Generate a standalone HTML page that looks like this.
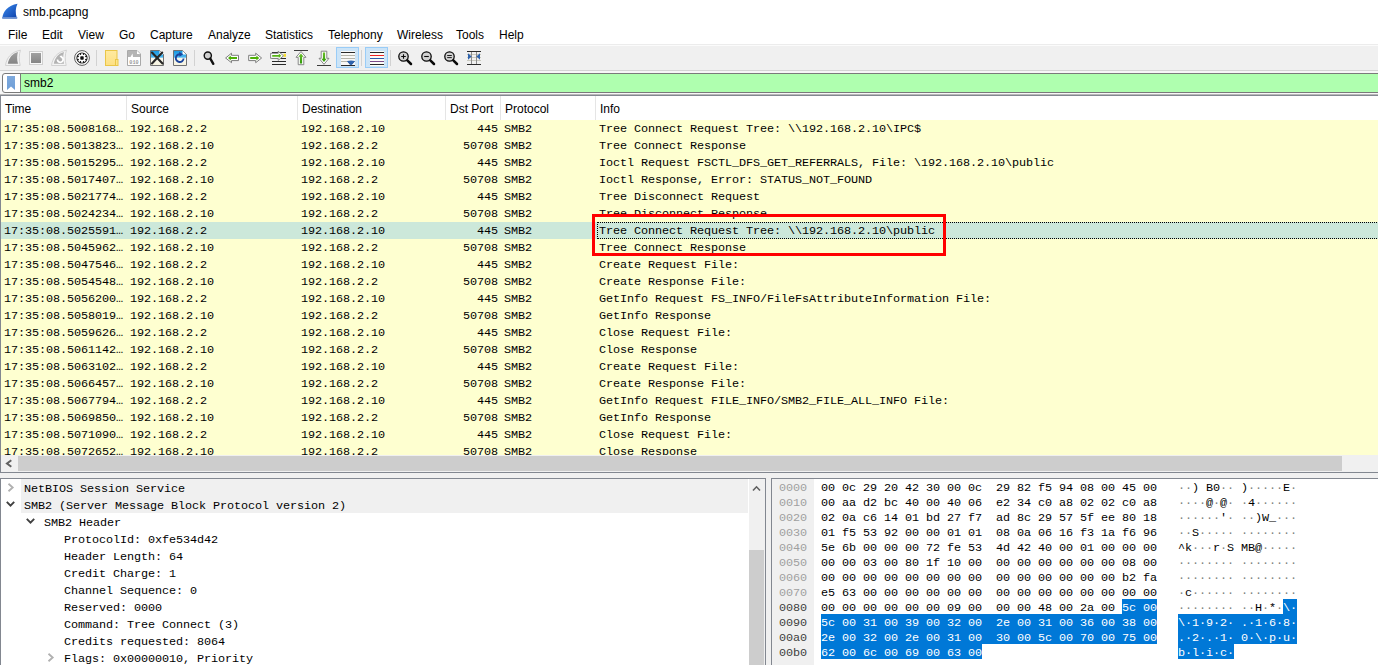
<!DOCTYPE html><html><head><meta charset="utf-8"><style>
*{box-sizing:border-box}
html,body{margin:0;padding:0}
body{width:1378px;height:665px;overflow:hidden;position:relative;background:#fff;font-family:"Liberation Sans",sans-serif;font-size:12px;color:#000}
.a{position:absolute}
.t{position:absolute;white-space:pre;line-height:17px}
.m{font-family:"Liberation Mono",monospace;font-size:11.8px;letter-spacing:-0.08px;margin-top:1px}
.menu span{position:absolute;top:0;white-space:pre}
svg{position:absolute;overflow:visible}
</style></head><body>
<svg style="left:0;top:0" width="24" height="22" viewBox="0 0 24 22"><defs><linearGradient id="fin" x1="0" y1="0" x2="1" y2="1"><stop offset="0" stop-color="#3b8cf0"/><stop offset="1" stop-color="#0d3fa8"/></linearGradient></defs><path d="M2.3 18.5 C3 11 8 5.5 17.5 3.8 C15.5 8 15 13 17 18.5 Z" fill="url(#fin)"/><rect x="2.3" y="17" width="15" height="1.6" fill="#6b8fd0"/></svg>
<div class="t" style="left:23px;top:4px">smb.pcapng</div>
<div class="t" style="left:8px;top:27px">File</div>
<div class="t" style="left:42px;top:27px">Edit</div>
<div class="t" style="left:78px;top:27px">View</div>
<div class="t" style="left:119px;top:27px">Go</div>
<div class="t" style="left:150px;top:27px">Capture</div>
<div class="t" style="left:208px;top:27px">Analyze</div>
<div class="t" style="left:265px;top:27px">Statistics</div>
<div class="t" style="left:328px;top:27px">Telephony</div>
<div class="t" style="left:397px;top:27px">Wireless</div>
<div class="t" style="left:456px;top:27px">Tools</div>
<div class="t" style="left:499px;top:27px">Help</div>
<div class="a" style="left:0;top:44px;width:1378px;height:1px;background:#ececec"></div>
<div class="a" style="left:0;top:45px;width:1378px;height:1px;background:#fbfbfb"></div>
<div class="a" style="left:0;top:46px;width:1378px;height:24px;background:#f0f0f0"></div>
<div class="a" style="left:0;top:70px;width:1378px;height:1px;background:#d4d4d4"></div>
<div class="a" style="left:0;top:71px;width:1378px;height:24px;background:#f7f7f7"></div>
<svg style="left:0;top:0" width="500" height="72" viewBox="0 0 500 72">
<defs>
<linearGradient id="gg" x1="0" y1="0" x2="0" y2="1"><stop offset="0" stop-color="#a0a0a0"/><stop offset="1" stop-color="#858585"/></linearGradient>
<linearGradient id="fold" x1="0" y1="0" x2="0" y2="1"><stop offset="0" stop-color="#ffeaa0"/><stop offset="1" stop-color="#fde083"/></linearGradient>
<linearGradient id="sky" x1="0" y1="0" x2="0" y2="1"><stop offset="0" stop-color="#1595e0"/><stop offset="0.45" stop-color="#4ab6f0"/><stop offset="0.5" stop-color="#f8f8f0"/><stop offset="1" stop-color="#f6f3de"/></linearGradient>
<linearGradient id="grn" x1="0" y1="0" x2="0" y2="1"><stop offset="0" stop-color="#6cc02a"/><stop offset="1" stop-color="#2f9a08"/></linearGradient>
</defs>
<!-- start fin (disabled) -->
<path d="M5.5 65.5 C6.5 58 11 52 20.5 50.2 C19 54 18.8 60 20.2 65.5 Z" fill="#f4f4f4" stroke="#d2d2d2" stroke-width="1"/>
<path d="M7.8 63.8 C9 57.5 12.5 53.5 18 52 C17 55 16.8 60 18 63.8 Z" fill="url(#gg)"/>
<!-- stop -->
<rect x="29.5" y="51.5" width="13" height="13" fill="#f8f8f8" stroke="#d0d0d0" stroke-width="1"/>
<rect x="31" y="53" width="10" height="10" fill="url(#gg)"/>
<!-- restart fin -->
<path d="M51.5 65.5 C52.5 58 57 52 66.5 50.2 C65 54 64.8 60 66.2 65.5 Z" fill="#f4f4f4" stroke="#d2d2d2" stroke-width="1"/>
<path d="M53.8 63.8 C55 57.5 58.5 53.5 64 52 C63 55 62.8 60 64 63.8 Z" fill="#b2b2b2"/>
<path d="M57.5 59.5 A2.8 2.8 0 1 0 61.5 57" fill="none" stroke="#fff" stroke-width="1.6"/>
<path d="M59.5 56 L62.5 55.5 L61.5 58.5 Z" fill="#fff"/>
<!-- options gear -->
<circle cx="82" cy="58" r="7.4" fill="#fff" stroke="#5a5a5a" stroke-width="1"/>
<circle cx="82" cy="58" r="5.6" fill="#1a1a1a"/>
<g fill="#fff" transform="translate(82 58)">
<circle r="3.3"/>
<rect x="-0.9" y="-4.6" width="1.8" height="9.2"/>
<rect x="-0.9" y="-4.6" width="1.8" height="9.2" transform="rotate(45)"/>
<rect x="-0.9" y="-4.6" width="1.8" height="9.2" transform="rotate(90)"/>
<rect x="-0.9" y="-4.6" width="1.8" height="9.2" transform="rotate(135)"/>
</g>
<rect x="80.3" y="56.3" width="3.4" height="3.4" rx="0.8" fill="#111"/>
<!-- separators -->
<rect x="96" y="50" width="1" height="16" fill="#d2d2d2"/>
<rect x="194" y="50" width="1" height="16" fill="#d2d2d2"/>
<rect x="361" y="50" width="1" height="16" fill="#d2d2d2"/>
<rect x="390" y="50" width="1" height="16" fill="#d2d2d2"/>
<!-- open folder -->
<rect x="105.5" y="50.5" width="11.5" height="15" fill="url(#fold)" stroke="#eac648" stroke-width="1"/>
<rect x="115.5" y="59.5" width="2.5" height="6" fill="#fde58c" stroke="#eac648" stroke-width="1"/>
<!-- open recent 010 -->
<path d="M127.5 50.5 H137 L140.5 54 V65.5 H127.5 Z" fill="#fff" stroke="#a9a9a9" stroke-width="1"/>
<path d="M128 51 H136.8 L140 54.2 V57 H128 Z" fill="#b4b4b4"/>
<path d="M137 51 L140 54 H137 Z" fill="#fff"/>
<path d="M130.5 57 L132.5 53.5 L133 57 Z" fill="#fff"/>
<text x="134" y="63.5" font-family="Liberation Mono" font-size="5.2" fill="#9a9a9a" text-anchor="middle" font-weight="bold">010</text>
<!-- close file -->
<path d="M150.5 50.5 H159.5 L163.5 54.5 V65.5 H150.5 Z" fill="url(#sky)" stroke="#727272" stroke-width="1"/>
<path d="M159.5 50.8 L163.2 54.5 H159.5 Z" fill="#fff"/>
<path d="M152 52.5 L162.5 63.5 M162.2 52.5 L152 63.5" stroke="#262626" stroke-width="2.1" stroke-linecap="round"/>
<!-- reload -->
<path d="M173.5 50.5 H182.5 L186.5 54.5 V65.5 H173.5 Z" fill="url(#sky)" stroke="#727272" stroke-width="1"/>
<path d="M182.5 50.8 L186.2 54.5 H182.5 Z" fill="#fff"/>
<path d="M183.6 58.5 A3.9 3.9 0 1 1 180.5 54.3" fill="none" stroke="#1b449c" stroke-width="1.9"/>
<path d="M179.2 51.8 L183.2 54.2 L179.5 56.8 Z" fill="#1b449c"/>
<!-- find -->
<circle cx="207.8" cy="55.6" r="3.6" fill="#cfcfcf" stroke="#111" stroke-width="1.4"/>
<path d="M210.3 58.6 L213.3 63.8" stroke="#111" stroke-width="2.4" stroke-linecap="round"/>
<!-- back -->
<path d="M225.6 58 L231.5 53.2 V55.3 H238.5 V60.6 H231.5 V62.7 Z" fill="#fff" stroke="#7c7c7c" stroke-width="1" stroke-linejoin="round"/>
<path d="M228 58 L230.8 55.6 V57 H237 V59 H230.8 V60.4 Z" fill="#4daf07"/>
<!-- forward -->
<path d="M261.6 58 L255.7 53.2 V55.3 H248.7 V60.6 H255.7 V62.7 Z" fill="#fff" stroke="#7c7c7c" stroke-width="1" stroke-linejoin="round"/>
<path d="M259.2 58 L256.4 55.6 V57 H250.2 V59 H256.4 V60.4 Z" fill="#4daf07"/>
<!-- go to packet -->
<rect x="272" y="52" width="14" height="1" fill="#2a2a2a"/>
<rect x="272" y="58" width="14" height="1" fill="#2a2a2a"/>
<rect x="272" y="61" width="14" height="1" fill="#2a2a2a"/>
<rect x="272" y="64" width="14" height="1" fill="#2a2a2a"/>
<rect x="283.5" y="53.8" width="2.5" height="3" fill="#f6de30"/>
<path d="M283.5 55.8 L278.2 51.2 V53.3 H270.6 V58.4 H278.2 V60.4 Z" fill="#fff" stroke="#7c7c7c" stroke-width="0.9" stroke-linejoin="round"/>
<path d="M281.2 55.8 L278.8 53.6 V55 H272.2 V56.8 H278.8 V58.1 Z" fill="#56b515"/>
<!-- first packet -->
<rect x="294" y="50" width="14" height="1" fill="#3c3c3c"/>
<path d="M301 51.5 L306 57.3 H303.8 V64.7 H298.2 V57.3 H296 Z" fill="#fff" stroke="#7c7c7c" stroke-width="0.9" stroke-linejoin="round"/>
<path d="M301 53.5 L303.6 56.8 H302.1 V63.5 H299.9 V56.8 H298.4 Z" fill="url(#grn)"/>
<!-- last packet -->
<rect x="317" y="65" width="14" height="1" fill="#3c3c3c"/>
<path d="M324 64.3 L329 58.3 H326.8 V51.2 H321.2 V58.3 H319 Z" fill="#fff" stroke="#7c7c7c" stroke-width="0.9" stroke-linejoin="round"/>
<path d="M324 62 L326.6 58.8 H325.1 V52.5 H322.9 V58.8 H321.4 Z" fill="url(#grn)"/>
<!-- autoscroll (checked) -->
<rect x="336.5" y="47.5" width="22" height="20" fill="#cce4f7" stroke="#99ccf7" stroke-width="1"/>
<rect x="341" y="51" width="14" height="15" fill="#f8f8f6"/>
<rect x="341" y="52" width="14" height="1" fill="#2a2a2a"/>
<rect x="341" y="55" width="14" height="1" fill="#b4b4aa"/>
<rect x="341" y="58" width="14" height="1" fill="#b4b4aa"/>
<rect x="341" y="61" width="14" height="1" fill="#b4b4aa"/>
<rect x="341" y="65" width="14" height="1" fill="#2a2a2a"/>
<path d="M347 61.2 H355 L352.3 64.2 H349.7 L351 66 Z" fill="#2f63ad"/>
<path d="M347.2 61 Q351 60 354.8 61 L352 64.5 Q351 65.8 350 64.5 Z" fill="#2f63ad"/>
<!-- colorize (checked) -->
<rect x="365.5" y="47.5" width="22" height="20" fill="#cce4f7" stroke="#99ccf7" stroke-width="1"/>
<rect x="370" y="51" width="14" height="15" fill="#fbfbf6"/>
<rect x="370" y="52" width="14" height="1" fill="#2a2a2a"/>
<rect x="370" y="55" width="14" height="1" fill="#ee2222"/>
<rect x="370" y="58" width="14" height="1" fill="#2f5aa8"/>
<rect x="370" y="61" width="14" height="1" fill="#7a4a88"/>
<rect x="370" y="64" width="14" height="1" fill="#2a2a2a"/>
<!-- zoom in -->
<circle cx="403.5" cy="56.5" r="4.7" fill="#d2d2d2" stroke="#0a0a0a" stroke-width="1.3"/>
<path d="M401.2 56.5 H405.8 M403.5 54.2 V58.8" stroke="#0a0a0a" stroke-width="1.1"/>
<path d="M407.3 60.3 L411 64" stroke="#0a0a0a" stroke-width="2.5" stroke-linecap="round"/>
<!-- zoom out -->
<circle cx="426.5" cy="56.5" r="4.7" fill="#d2d2d2" stroke="#0a0a0a" stroke-width="1.3"/>
<path d="M424.2 56.5 H428.8" stroke="#0a0a0a" stroke-width="1.1"/>
<path d="M430.3 60.3 L434 64" stroke="#0a0a0a" stroke-width="2.5" stroke-linecap="round"/>
<!-- normal size -->
<circle cx="449.5" cy="56.5" r="4.7" fill="#d2d2d2" stroke="#0a0a0a" stroke-width="1.3"/>
<path d="M447.2 55.5 H451.8 M447.2 57.6 H451.8" stroke="#0a0a0a" stroke-width="0.9"/>
<path d="M453.3 60.3 L457 64" stroke="#0a0a0a" stroke-width="2.5" stroke-linecap="round"/>
<!-- resize columns -->
<rect x="467" y="51" width="14" height="1" fill="#2a2a2a"/>
<rect x="467" y="64" width="14" height="1" fill="#2a2a2a"/>
<rect x="467" y="54" width="14" height="1" fill="#c8c8be"/>
<rect x="467" y="57" width="14" height="1" fill="#c8c8be"/>
<rect x="467" y="60" width="14" height="1" fill="#c8c8be"/>
<rect x="471" y="52" width="1" height="12" fill="#8c8c8c"/>
<rect x="476" y="52" width="1" height="12" fill="#8c8c8c"/>
<path d="M468 53.3 L471.6 56.5 L468 59.8 Z" fill="#2f63ad"/>
<path d="M480 53.3 L476.4 56.5 L480 59.8 Z" fill="#2f63ad"/>
</svg>

<div class="a" style="left:2px;top:73px;width:1380px;height:20px;border:1px solid #7a7a7a;border-radius:3px;background:#fff;overflow:hidden"><div class="a" style="left:17px;top:0;width:1370px;height:18px;background:#afffaf;border-left:1px solid #7a7a7a"></div></div>
<svg style="left:0;top:0" width="30" height="95"><defs><linearGradient id="bm" x1="0" y1="0" x2="0" y2="1"><stop offset="0" stop-color="#7ea9dc"/><stop offset="1" stop-color="#6f9fd8"/></linearGradient></defs><path d="M7 76 H15 V90 L11 86.5 L7 90 Z" fill="url(#bm)"/></svg>
<div class="t" style="left:24px;top:75px">smb2</div>
<div class="a" style="left:0;top:94px;width:1378px;height:1px;background:#b9b9b9"></div>
<div class="a" style="left:0;top:95px;width:1378px;height:378px;border-top:1px solid #828790;border-left:1px solid #828790;border-bottom:1px solid #828790;background:#fff"></div>
<div class="a" style="left:126px;top:96px;width:1px;height:24px;background:#e5e5e5"></div>
<div class="a" style="left:297px;top:96px;width:1px;height:24px;background:#e5e5e5"></div>
<div class="a" style="left:445px;top:96px;width:1px;height:24px;background:#e5e5e5"></div>
<div class="a" style="left:500px;top:96px;width:1px;height:24px;background:#e5e5e5"></div>
<div class="a" style="left:595px;top:96px;width:1px;height:24px;background:#e5e5e5"></div>
<div class="t" style="left:5px;top:101px">Time</div>
<div class="t" style="left:131px;top:101px">Source</div>
<div class="t" style="left:302px;top:101px">Destination</div>
<div class="t" style="left:450px;top:101px">Dst Port</div>
<div class="t" style="left:505px;top:101px">Protocol</div>
<div class="t" style="left:600px;top:101px">Info</div>
<div class="a" style="left:1px;top:120px;width:1377px;height:335px;overflow:hidden">
<div class="a" style="left:0;top:0px;width:1377px;height:17px;background:#feffd0"></div>
<div class="t m" style="left:3px;top:0px">17:35:08.5008168…</div>
<div class="t m" style="left:129px;top:0px">192.168.2.2</div>
<div class="t m" style="left:300px;top:0px">192.168.2.10</div>
<div class="t m" style="left:476px;top:0px">445</div>
<div class="t m" style="left:503px;top:0px">SMB2</div>
<div class="t m" style="left:598px;top:0px">Tree Connect Request Tree: \\192.168.2.10\IPC$</div>
<div class="a" style="left:0;top:17px;width:1377px;height:17px;background:#feffd0"></div>
<div class="t m" style="left:3px;top:17px">17:35:08.5013823…</div>
<div class="t m" style="left:129px;top:17px">192.168.2.10</div>
<div class="t m" style="left:300px;top:17px">192.168.2.2</div>
<div class="t m" style="left:462px;top:17px">50708</div>
<div class="t m" style="left:503px;top:17px">SMB2</div>
<div class="t m" style="left:598px;top:17px">Tree Connect Response</div>
<div class="a" style="left:0;top:34px;width:1377px;height:17px;background:#feffd0"></div>
<div class="t m" style="left:3px;top:34px">17:35:08.5015295…</div>
<div class="t m" style="left:129px;top:34px">192.168.2.2</div>
<div class="t m" style="left:300px;top:34px">192.168.2.10</div>
<div class="t m" style="left:476px;top:34px">445</div>
<div class="t m" style="left:503px;top:34px">SMB2</div>
<div class="t m" style="left:598px;top:34px">Ioctl Request FSCTL_DFS_GET_REFERRALS, File: \192.168.2.10\public</div>
<div class="a" style="left:0;top:51px;width:1377px;height:17px;background:#feffd0"></div>
<div class="t m" style="left:3px;top:51px">17:35:08.5017407…</div>
<div class="t m" style="left:129px;top:51px">192.168.2.10</div>
<div class="t m" style="left:300px;top:51px">192.168.2.2</div>
<div class="t m" style="left:462px;top:51px">50708</div>
<div class="t m" style="left:503px;top:51px">SMB2</div>
<div class="t m" style="left:598px;top:51px">Ioctl Response, Error: STATUS_NOT_FOUND</div>
<div class="a" style="left:0;top:68px;width:1377px;height:17px;background:#feffd0"></div>
<div class="t m" style="left:3px;top:68px">17:35:08.5021774…</div>
<div class="t m" style="left:129px;top:68px">192.168.2.2</div>
<div class="t m" style="left:300px;top:68px">192.168.2.10</div>
<div class="t m" style="left:476px;top:68px">445</div>
<div class="t m" style="left:503px;top:68px">SMB2</div>
<div class="t m" style="left:598px;top:68px">Tree Disconnect Request</div>
<div class="a" style="left:0;top:85px;width:1377px;height:17px;background:#feffd0"></div>
<div class="t m" style="left:3px;top:85px">17:35:08.5024234…</div>
<div class="t m" style="left:129px;top:85px">192.168.2.10</div>
<div class="t m" style="left:300px;top:85px">192.168.2.2</div>
<div class="t m" style="left:462px;top:85px">50708</div>
<div class="t m" style="left:503px;top:85px">SMB2</div>
<div class="t m" style="left:598px;top:85px">Tree Disconnect Response</div>
<div class="a" style="left:0;top:102px;width:1377px;height:17px;background:#cce8da"></div>
<div class="t m" style="left:3px;top:102px">17:35:08.5025591…</div>
<div class="t m" style="left:129px;top:102px">192.168.2.2</div>
<div class="t m" style="left:300px;top:102px">192.168.2.10</div>
<div class="t m" style="left:476px;top:102px">445</div>
<div class="t m" style="left:503px;top:102px">SMB2</div>
<div class="t m" style="left:598px;top:102px">Tree Connect Request Tree: \\192.168.2.10\public</div>
<div class="a" style="left:596px;top:102px;width:800px;height:17px;border:1px dotted #000"></div>
<div class="a" style="left:0;top:119px;width:1377px;height:17px;background:#feffd0"></div>
<div class="t m" style="left:3px;top:119px">17:35:08.5045962…</div>
<div class="t m" style="left:129px;top:119px">192.168.2.10</div>
<div class="t m" style="left:300px;top:119px">192.168.2.2</div>
<div class="t m" style="left:462px;top:119px">50708</div>
<div class="t m" style="left:503px;top:119px">SMB2</div>
<div class="t m" style="left:598px;top:119px">Tree Connect Response</div>
<div class="a" style="left:0;top:136px;width:1377px;height:17px;background:#feffd0"></div>
<div class="t m" style="left:3px;top:136px">17:35:08.5047546…</div>
<div class="t m" style="left:129px;top:136px">192.168.2.2</div>
<div class="t m" style="left:300px;top:136px">192.168.2.10</div>
<div class="t m" style="left:476px;top:136px">445</div>
<div class="t m" style="left:503px;top:136px">SMB2</div>
<div class="t m" style="left:598px;top:136px">Create Request File:</div>
<div class="a" style="left:0;top:153px;width:1377px;height:17px;background:#feffd0"></div>
<div class="t m" style="left:3px;top:153px">17:35:08.5054548…</div>
<div class="t m" style="left:129px;top:153px">192.168.2.10</div>
<div class="t m" style="left:300px;top:153px">192.168.2.2</div>
<div class="t m" style="left:462px;top:153px">50708</div>
<div class="t m" style="left:503px;top:153px">SMB2</div>
<div class="t m" style="left:598px;top:153px">Create Response File:</div>
<div class="a" style="left:0;top:170px;width:1377px;height:17px;background:#feffd0"></div>
<div class="t m" style="left:3px;top:170px">17:35:08.5056200…</div>
<div class="t m" style="left:129px;top:170px">192.168.2.2</div>
<div class="t m" style="left:300px;top:170px">192.168.2.10</div>
<div class="t m" style="left:476px;top:170px">445</div>
<div class="t m" style="left:503px;top:170px">SMB2</div>
<div class="t m" style="left:598px;top:170px">GetInfo Request FS_INFO/FileFsAttributeInformation File:</div>
<div class="a" style="left:0;top:187px;width:1377px;height:17px;background:#feffd0"></div>
<div class="t m" style="left:3px;top:187px">17:35:08.5058019…</div>
<div class="t m" style="left:129px;top:187px">192.168.2.10</div>
<div class="t m" style="left:300px;top:187px">192.168.2.2</div>
<div class="t m" style="left:462px;top:187px">50708</div>
<div class="t m" style="left:503px;top:187px">SMB2</div>
<div class="t m" style="left:598px;top:187px">GetInfo Response</div>
<div class="a" style="left:0;top:204px;width:1377px;height:17px;background:#feffd0"></div>
<div class="t m" style="left:3px;top:204px">17:35:08.5059626…</div>
<div class="t m" style="left:129px;top:204px">192.168.2.2</div>
<div class="t m" style="left:300px;top:204px">192.168.2.10</div>
<div class="t m" style="left:476px;top:204px">445</div>
<div class="t m" style="left:503px;top:204px">SMB2</div>
<div class="t m" style="left:598px;top:204px">Close Request File:</div>
<div class="a" style="left:0;top:221px;width:1377px;height:17px;background:#feffd0"></div>
<div class="t m" style="left:3px;top:221px">17:35:08.5061142…</div>
<div class="t m" style="left:129px;top:221px">192.168.2.10</div>
<div class="t m" style="left:300px;top:221px">192.168.2.2</div>
<div class="t m" style="left:462px;top:221px">50708</div>
<div class="t m" style="left:503px;top:221px">SMB2</div>
<div class="t m" style="left:598px;top:221px">Close Response</div>
<div class="a" style="left:0;top:238px;width:1377px;height:17px;background:#feffd0"></div>
<div class="t m" style="left:3px;top:238px">17:35:08.5063102…</div>
<div class="t m" style="left:129px;top:238px">192.168.2.2</div>
<div class="t m" style="left:300px;top:238px">192.168.2.10</div>
<div class="t m" style="left:476px;top:238px">445</div>
<div class="t m" style="left:503px;top:238px">SMB2</div>
<div class="t m" style="left:598px;top:238px">Create Request File:</div>
<div class="a" style="left:0;top:255px;width:1377px;height:17px;background:#feffd0"></div>
<div class="t m" style="left:3px;top:255px">17:35:08.5066457…</div>
<div class="t m" style="left:129px;top:255px">192.168.2.10</div>
<div class="t m" style="left:300px;top:255px">192.168.2.2</div>
<div class="t m" style="left:462px;top:255px">50708</div>
<div class="t m" style="left:503px;top:255px">SMB2</div>
<div class="t m" style="left:598px;top:255px">Create Response File:</div>
<div class="a" style="left:0;top:272px;width:1377px;height:17px;background:#feffd0"></div>
<div class="t m" style="left:3px;top:272px">17:35:08.5067794…</div>
<div class="t m" style="left:129px;top:272px">192.168.2.2</div>
<div class="t m" style="left:300px;top:272px">192.168.2.10</div>
<div class="t m" style="left:476px;top:272px">445</div>
<div class="t m" style="left:503px;top:272px">SMB2</div>
<div class="t m" style="left:598px;top:272px">GetInfo Request FILE_INFO/SMB2_FILE_ALL_INFO File:</div>
<div class="a" style="left:0;top:289px;width:1377px;height:17px;background:#feffd0"></div>
<div class="t m" style="left:3px;top:289px">17:35:08.5069850…</div>
<div class="t m" style="left:129px;top:289px">192.168.2.10</div>
<div class="t m" style="left:300px;top:289px">192.168.2.2</div>
<div class="t m" style="left:462px;top:289px">50708</div>
<div class="t m" style="left:503px;top:289px">SMB2</div>
<div class="t m" style="left:598px;top:289px">GetInfo Response</div>
<div class="a" style="left:0;top:306px;width:1377px;height:17px;background:#feffd0"></div>
<div class="t m" style="left:3px;top:306px">17:35:08.5071090…</div>
<div class="t m" style="left:129px;top:306px">192.168.2.2</div>
<div class="t m" style="left:300px;top:306px">192.168.2.10</div>
<div class="t m" style="left:476px;top:306px">445</div>
<div class="t m" style="left:503px;top:306px">SMB2</div>
<div class="t m" style="left:598px;top:306px">Close Request File:</div>
<div class="a" style="left:0;top:323px;width:1377px;height:17px;background:#feffd0"></div>
<div class="t m" style="left:3px;top:323px">17:35:08.5072652…</div>
<div class="t m" style="left:129px;top:323px">192.168.2.10</div>
<div class="t m" style="left:300px;top:323px">192.168.2.2</div>
<div class="t m" style="left:462px;top:323px">50708</div>
<div class="t m" style="left:503px;top:323px">SMB2</div>
<div class="t m" style="left:598px;top:323px">Close Response</div>
</div>
<div class="a" style="left:1px;top:455px;width:1377px;height:17px;background:#f0f0f0"></div>
<div class="a" style="left:18px;top:456px;width:1324px;height:15px;background:#cdcdcd"></div>
<svg style="left:0;top:0" width="20" height="480"><path d="M11.3 460.3 L7 463.5 L11.3 466.7" stroke="#606060" stroke-width="2" fill="none"/></svg>
<div class="a" style="left:592px;top:214px;width:354px;height:42px;border:3px solid #ff0000"></div>
<div class="a" style="left:0;top:473px;width:1378px;height:5px;background:#f0f0f0"></div>
<div class="a" style="left:0;top:478px;width:766px;height:200px;border-top:1px solid #828790;border-left:1px solid #828790;border-right:1px solid #828790;background:#fff"></div>
<div class="a" style="left:749px;top:479px;width:16px;height:200px;background:#f0f0f0"></div>
<div class="a" style="left:749px;top:550px;width:15px;height:120px;background:#cdcdcd"></div>
<svg style="left:0;top:0" width="770" height="500"><path d="M753 490.5 L756.5 486.8 L760 490.5" stroke="#606060" stroke-width="1.6" fill="none"/></svg>
<div class="a" style="left:21px;top:479px;width:727px;height:17px;background:#f0f0f0"></div>
<div class="t m" style="left:24px;top:480px">NetBIOS Session Service</div>
<svg style="left:0;top:0" width="770" height="680"><path d="M8.5 483.8 L12.7 487.5 L8.5 491.2" stroke="#b0b0b0" stroke-width="1.8" fill="none"/></svg>
<div class="a" style="left:21px;top:496px;width:727px;height:17px;background:#f0f0f0"></div>
<div class="t m" style="left:24px;top:497px">SMB2 (Server Message Block Protocol version 2)</div>
<svg style="left:0;top:0" width="770" height="680"><path d="M6.8 501.8 L10.5 505.6 L14.2 501.8" stroke="#404040" stroke-width="1.9" fill="none"/></svg>
<div class="t m" style="left:44px;top:514px">SMB2 Header</div>
<svg style="left:0;top:0" width="770" height="680"><path d="M26.8 518.8 L30.5 522.6 L34.2 518.8" stroke="#404040" stroke-width="1.9" fill="none"/></svg>
<div class="t m" style="left:64px;top:531px">ProtocolId: 0xfe534d42</div>
<div class="t m" style="left:64px;top:548px">Header Length: 64</div>
<div class="t m" style="left:64px;top:565px">Credit Charge: 1</div>
<div class="t m" style="left:64px;top:582px">Channel Sequence: 0</div>
<div class="t m" style="left:64px;top:599px">Reserved: 0000</div>
<div class="t m" style="left:64px;top:616px">Command: Tree Connect (3)</div>
<div class="t m" style="left:64px;top:633px">Credits requested: 8064</div>
<div class="t m" style="left:64px;top:650px">Flags: 0x00000010, Priority</div>
<svg style="left:0;top:0" width="770" height="680"><path d="M48.5 653.8 L52.7 657.5 L48.5 661.2" stroke="#b0b0b0" stroke-width="1.8" fill="none"/></svg>
<div class="a" style="left:766px;top:478px;width:5px;height:200px;background:#f0f0f0"></div>
<div class="a" style="left:771px;top:478px;width:607px;height:200px;border-top:1px solid #828790;border-left:1px solid #828790;background:#fff"></div>
<div class="a" style="left:772px;top:479px;width:42px;height:200px;background:#f0f0f0"></div>
<div class="t m" style="left:779px;top:479px;color:#a0a0a0">0000</div>
<div class="t m" style="left:821px;top:479px;color:#000">00</div>
<div class="t m" style="left:842px;top:479px;color:#000">0c</div>
<div class="t m" style="left:863px;top:479px;color:#000">29</div>
<div class="t m" style="left:884px;top:479px;color:#000">20</div>
<div class="t m" style="left:905px;top:479px;color:#000">42</div>
<div class="t m" style="left:926px;top:479px;color:#000">30</div>
<div class="t m" style="left:947px;top:479px;color:#000">00</div>
<div class="t m" style="left:968px;top:479px;color:#000">0c</div>
<div class="t m" style="left:996px;top:479px;color:#000">29</div>
<div class="t m" style="left:1017px;top:479px;color:#000">82</div>
<div class="t m" style="left:1038px;top:479px;color:#000">f5</div>
<div class="t m" style="left:1059px;top:479px;color:#000">94</div>
<div class="t m" style="left:1080px;top:479px;color:#000">08</div>
<div class="t m" style="left:1101px;top:479px;color:#000">00</div>
<div class="t m" style="left:1122px;top:479px;color:#000">45</div>
<div class="t m" style="left:1143px;top:479px;color:#000">00</div>
<div class="t m" style="left:1178px;top:479px;color:#808080">·</div>
<div class="t m" style="left:1185px;top:479px;color:#808080">·</div>
<div class="t m" style="left:1192px;top:479px;color:#000">)</div>
<div class="t m" style="left:1199px;top:479px;color:#000"> </div>
<div class="t m" style="left:1206px;top:479px;color:#000">B</div>
<div class="t m" style="left:1213px;top:479px;color:#000">0</div>
<div class="t m" style="left:1220px;top:479px;color:#808080">·</div>
<div class="t m" style="left:1227px;top:479px;color:#808080">·</div>
<div class="t m" style="left:1241px;top:479px;color:#000">)</div>
<div class="t m" style="left:1248px;top:479px;color:#808080">·</div>
<div class="t m" style="left:1255px;top:479px;color:#808080">·</div>
<div class="t m" style="left:1262px;top:479px;color:#808080">·</div>
<div class="t m" style="left:1269px;top:479px;color:#808080">·</div>
<div class="t m" style="left:1276px;top:479px;color:#808080">·</div>
<div class="t m" style="left:1283px;top:479px;color:#000">E</div>
<div class="t m" style="left:1290px;top:479px;color:#808080">·</div>
<div class="t m" style="left:779px;top:494px;color:#a0a0a0">0010</div>
<div class="t m" style="left:821px;top:494px;color:#000">00</div>
<div class="t m" style="left:842px;top:494px;color:#000">aa</div>
<div class="t m" style="left:863px;top:494px;color:#000">d2</div>
<div class="t m" style="left:884px;top:494px;color:#000">bc</div>
<div class="t m" style="left:905px;top:494px;color:#000">40</div>
<div class="t m" style="left:926px;top:494px;color:#000">00</div>
<div class="t m" style="left:947px;top:494px;color:#000">40</div>
<div class="t m" style="left:968px;top:494px;color:#000">06</div>
<div class="t m" style="left:996px;top:494px;color:#000">e2</div>
<div class="t m" style="left:1017px;top:494px;color:#000">34</div>
<div class="t m" style="left:1038px;top:494px;color:#000">c0</div>
<div class="t m" style="left:1059px;top:494px;color:#000">a8</div>
<div class="t m" style="left:1080px;top:494px;color:#000">02</div>
<div class="t m" style="left:1101px;top:494px;color:#000">02</div>
<div class="t m" style="left:1122px;top:494px;color:#000">c0</div>
<div class="t m" style="left:1143px;top:494px;color:#000">a8</div>
<div class="t m" style="left:1178px;top:494px;color:#808080">·</div>
<div class="t m" style="left:1185px;top:494px;color:#808080">·</div>
<div class="t m" style="left:1192px;top:494px;color:#808080">·</div>
<div class="t m" style="left:1199px;top:494px;color:#808080">·</div>
<div class="t m" style="left:1206px;top:494px;color:#000">@</div>
<div class="t m" style="left:1213px;top:494px;color:#808080">·</div>
<div class="t m" style="left:1220px;top:494px;color:#000">@</div>
<div class="t m" style="left:1227px;top:494px;color:#808080">·</div>
<div class="t m" style="left:1241px;top:494px;color:#808080">·</div>
<div class="t m" style="left:1248px;top:494px;color:#000">4</div>
<div class="t m" style="left:1255px;top:494px;color:#808080">·</div>
<div class="t m" style="left:1262px;top:494px;color:#808080">·</div>
<div class="t m" style="left:1269px;top:494px;color:#808080">·</div>
<div class="t m" style="left:1276px;top:494px;color:#808080">·</div>
<div class="t m" style="left:1283px;top:494px;color:#808080">·</div>
<div class="t m" style="left:1290px;top:494px;color:#808080">·</div>
<div class="t m" style="left:779px;top:509px;color:#a0a0a0">0020</div>
<div class="t m" style="left:821px;top:509px;color:#000">02</div>
<div class="t m" style="left:842px;top:509px;color:#000">0a</div>
<div class="t m" style="left:863px;top:509px;color:#000">c6</div>
<div class="t m" style="left:884px;top:509px;color:#000">14</div>
<div class="t m" style="left:905px;top:509px;color:#000">01</div>
<div class="t m" style="left:926px;top:509px;color:#000">bd</div>
<div class="t m" style="left:947px;top:509px;color:#000">27</div>
<div class="t m" style="left:968px;top:509px;color:#000">f7</div>
<div class="t m" style="left:996px;top:509px;color:#000">ad</div>
<div class="t m" style="left:1017px;top:509px;color:#000">8c</div>
<div class="t m" style="left:1038px;top:509px;color:#000">29</div>
<div class="t m" style="left:1059px;top:509px;color:#000">57</div>
<div class="t m" style="left:1080px;top:509px;color:#000">5f</div>
<div class="t m" style="left:1101px;top:509px;color:#000">ee</div>
<div class="t m" style="left:1122px;top:509px;color:#000">80</div>
<div class="t m" style="left:1143px;top:509px;color:#000">18</div>
<div class="t m" style="left:1178px;top:509px;color:#808080">·</div>
<div class="t m" style="left:1185px;top:509px;color:#808080">·</div>
<div class="t m" style="left:1192px;top:509px;color:#808080">·</div>
<div class="t m" style="left:1199px;top:509px;color:#808080">·</div>
<div class="t m" style="left:1206px;top:509px;color:#808080">·</div>
<div class="t m" style="left:1213px;top:509px;color:#808080">·</div>
<div class="t m" style="left:1220px;top:509px;color:#000">&#x27;</div>
<div class="t m" style="left:1227px;top:509px;color:#808080">·</div>
<div class="t m" style="left:1241px;top:509px;color:#808080">·</div>
<div class="t m" style="left:1248px;top:509px;color:#808080">·</div>
<div class="t m" style="left:1255px;top:509px;color:#000">)</div>
<div class="t m" style="left:1262px;top:509px;color:#000">W</div>
<div class="t m" style="left:1269px;top:509px;color:#000">_</div>
<div class="t m" style="left:1276px;top:509px;color:#808080">·</div>
<div class="t m" style="left:1283px;top:509px;color:#808080">·</div>
<div class="t m" style="left:1290px;top:509px;color:#808080">·</div>
<div class="t m" style="left:779px;top:524px;color:#a0a0a0">0030</div>
<div class="t m" style="left:821px;top:524px;color:#000">01</div>
<div class="t m" style="left:842px;top:524px;color:#000">f5</div>
<div class="t m" style="left:863px;top:524px;color:#000">53</div>
<div class="t m" style="left:884px;top:524px;color:#000">92</div>
<div class="t m" style="left:905px;top:524px;color:#000">00</div>
<div class="t m" style="left:926px;top:524px;color:#000">00</div>
<div class="t m" style="left:947px;top:524px;color:#000">01</div>
<div class="t m" style="left:968px;top:524px;color:#000">01</div>
<div class="t m" style="left:996px;top:524px;color:#000">08</div>
<div class="t m" style="left:1017px;top:524px;color:#000">0a</div>
<div class="t m" style="left:1038px;top:524px;color:#000">06</div>
<div class="t m" style="left:1059px;top:524px;color:#000">16</div>
<div class="t m" style="left:1080px;top:524px;color:#000">f3</div>
<div class="t m" style="left:1101px;top:524px;color:#000">1a</div>
<div class="t m" style="left:1122px;top:524px;color:#000">f6</div>
<div class="t m" style="left:1143px;top:524px;color:#000">96</div>
<div class="t m" style="left:1178px;top:524px;color:#808080">·</div>
<div class="t m" style="left:1185px;top:524px;color:#808080">·</div>
<div class="t m" style="left:1192px;top:524px;color:#000">S</div>
<div class="t m" style="left:1199px;top:524px;color:#808080">·</div>
<div class="t m" style="left:1206px;top:524px;color:#808080">·</div>
<div class="t m" style="left:1213px;top:524px;color:#808080">·</div>
<div class="t m" style="left:1220px;top:524px;color:#808080">·</div>
<div class="t m" style="left:1227px;top:524px;color:#808080">·</div>
<div class="t m" style="left:1241px;top:524px;color:#808080">·</div>
<div class="t m" style="left:1248px;top:524px;color:#808080">·</div>
<div class="t m" style="left:1255px;top:524px;color:#808080">·</div>
<div class="t m" style="left:1262px;top:524px;color:#808080">·</div>
<div class="t m" style="left:1269px;top:524px;color:#808080">·</div>
<div class="t m" style="left:1276px;top:524px;color:#808080">·</div>
<div class="t m" style="left:1283px;top:524px;color:#808080">·</div>
<div class="t m" style="left:1290px;top:524px;color:#808080">·</div>
<div class="t m" style="left:779px;top:539px;color:#a0a0a0">0040</div>
<div class="t m" style="left:821px;top:539px;color:#000">5e</div>
<div class="t m" style="left:842px;top:539px;color:#000">6b</div>
<div class="t m" style="left:863px;top:539px;color:#000">00</div>
<div class="t m" style="left:884px;top:539px;color:#000">00</div>
<div class="t m" style="left:905px;top:539px;color:#000">00</div>
<div class="t m" style="left:926px;top:539px;color:#000">72</div>
<div class="t m" style="left:947px;top:539px;color:#000">fe</div>
<div class="t m" style="left:968px;top:539px;color:#000">53</div>
<div class="t m" style="left:996px;top:539px;color:#000">4d</div>
<div class="t m" style="left:1017px;top:539px;color:#000">42</div>
<div class="t m" style="left:1038px;top:539px;color:#000">40</div>
<div class="t m" style="left:1059px;top:539px;color:#000">00</div>
<div class="t m" style="left:1080px;top:539px;color:#000">01</div>
<div class="t m" style="left:1101px;top:539px;color:#000">00</div>
<div class="t m" style="left:1122px;top:539px;color:#000">00</div>
<div class="t m" style="left:1143px;top:539px;color:#000">00</div>
<div class="t m" style="left:1178px;top:539px;color:#000">^</div>
<div class="t m" style="left:1185px;top:539px;color:#000">k</div>
<div class="t m" style="left:1192px;top:539px;color:#808080">·</div>
<div class="t m" style="left:1199px;top:539px;color:#808080">·</div>
<div class="t m" style="left:1206px;top:539px;color:#808080">·</div>
<div class="t m" style="left:1213px;top:539px;color:#000">r</div>
<div class="t m" style="left:1220px;top:539px;color:#808080">·</div>
<div class="t m" style="left:1227px;top:539px;color:#000">S</div>
<div class="t m" style="left:1241px;top:539px;color:#000">M</div>
<div class="t m" style="left:1248px;top:539px;color:#000">B</div>
<div class="t m" style="left:1255px;top:539px;color:#000">@</div>
<div class="t m" style="left:1262px;top:539px;color:#808080">·</div>
<div class="t m" style="left:1269px;top:539px;color:#808080">·</div>
<div class="t m" style="left:1276px;top:539px;color:#808080">·</div>
<div class="t m" style="left:1283px;top:539px;color:#808080">·</div>
<div class="t m" style="left:1290px;top:539px;color:#808080">·</div>
<div class="t m" style="left:779px;top:554px;color:#a0a0a0">0050</div>
<div class="t m" style="left:821px;top:554px;color:#000">00</div>
<div class="t m" style="left:842px;top:554px;color:#000">00</div>
<div class="t m" style="left:863px;top:554px;color:#000">03</div>
<div class="t m" style="left:884px;top:554px;color:#000">00</div>
<div class="t m" style="left:905px;top:554px;color:#000">80</div>
<div class="t m" style="left:926px;top:554px;color:#000">1f</div>
<div class="t m" style="left:947px;top:554px;color:#000">10</div>
<div class="t m" style="left:968px;top:554px;color:#000">00</div>
<div class="t m" style="left:996px;top:554px;color:#000">00</div>
<div class="t m" style="left:1017px;top:554px;color:#000">00</div>
<div class="t m" style="left:1038px;top:554px;color:#000">00</div>
<div class="t m" style="left:1059px;top:554px;color:#000">00</div>
<div class="t m" style="left:1080px;top:554px;color:#000">00</div>
<div class="t m" style="left:1101px;top:554px;color:#000">00</div>
<div class="t m" style="left:1122px;top:554px;color:#000">08</div>
<div class="t m" style="left:1143px;top:554px;color:#000">00</div>
<div class="t m" style="left:1178px;top:554px;color:#808080">·</div>
<div class="t m" style="left:1185px;top:554px;color:#808080">·</div>
<div class="t m" style="left:1192px;top:554px;color:#808080">·</div>
<div class="t m" style="left:1199px;top:554px;color:#808080">·</div>
<div class="t m" style="left:1206px;top:554px;color:#808080">·</div>
<div class="t m" style="left:1213px;top:554px;color:#808080">·</div>
<div class="t m" style="left:1220px;top:554px;color:#808080">·</div>
<div class="t m" style="left:1227px;top:554px;color:#808080">·</div>
<div class="t m" style="left:1241px;top:554px;color:#808080">·</div>
<div class="t m" style="left:1248px;top:554px;color:#808080">·</div>
<div class="t m" style="left:1255px;top:554px;color:#808080">·</div>
<div class="t m" style="left:1262px;top:554px;color:#808080">·</div>
<div class="t m" style="left:1269px;top:554px;color:#808080">·</div>
<div class="t m" style="left:1276px;top:554px;color:#808080">·</div>
<div class="t m" style="left:1283px;top:554px;color:#808080">·</div>
<div class="t m" style="left:1290px;top:554px;color:#808080">·</div>
<div class="t m" style="left:779px;top:569px;color:#a0a0a0">0060</div>
<div class="t m" style="left:821px;top:569px;color:#000">00</div>
<div class="t m" style="left:842px;top:569px;color:#000">00</div>
<div class="t m" style="left:863px;top:569px;color:#000">00</div>
<div class="t m" style="left:884px;top:569px;color:#000">00</div>
<div class="t m" style="left:905px;top:569px;color:#000">00</div>
<div class="t m" style="left:926px;top:569px;color:#000">00</div>
<div class="t m" style="left:947px;top:569px;color:#000">00</div>
<div class="t m" style="left:968px;top:569px;color:#000">00</div>
<div class="t m" style="left:996px;top:569px;color:#000">00</div>
<div class="t m" style="left:1017px;top:569px;color:#000">00</div>
<div class="t m" style="left:1038px;top:569px;color:#000">00</div>
<div class="t m" style="left:1059px;top:569px;color:#000">00</div>
<div class="t m" style="left:1080px;top:569px;color:#000">00</div>
<div class="t m" style="left:1101px;top:569px;color:#000">00</div>
<div class="t m" style="left:1122px;top:569px;color:#000">b2</div>
<div class="t m" style="left:1143px;top:569px;color:#000">fa</div>
<div class="t m" style="left:1178px;top:569px;color:#808080">·</div>
<div class="t m" style="left:1185px;top:569px;color:#808080">·</div>
<div class="t m" style="left:1192px;top:569px;color:#808080">·</div>
<div class="t m" style="left:1199px;top:569px;color:#808080">·</div>
<div class="t m" style="left:1206px;top:569px;color:#808080">·</div>
<div class="t m" style="left:1213px;top:569px;color:#808080">·</div>
<div class="t m" style="left:1220px;top:569px;color:#808080">·</div>
<div class="t m" style="left:1227px;top:569px;color:#808080">·</div>
<div class="t m" style="left:1241px;top:569px;color:#808080">·</div>
<div class="t m" style="left:1248px;top:569px;color:#808080">·</div>
<div class="t m" style="left:1255px;top:569px;color:#808080">·</div>
<div class="t m" style="left:1262px;top:569px;color:#808080">·</div>
<div class="t m" style="left:1269px;top:569px;color:#808080">·</div>
<div class="t m" style="left:1276px;top:569px;color:#808080">·</div>
<div class="t m" style="left:1283px;top:569px;color:#808080">·</div>
<div class="t m" style="left:1290px;top:569px;color:#808080">·</div>
<div class="t m" style="left:779px;top:584px;color:#a0a0a0">0070</div>
<div class="t m" style="left:821px;top:584px;color:#000">e5</div>
<div class="t m" style="left:842px;top:584px;color:#000">63</div>
<div class="t m" style="left:863px;top:584px;color:#000">00</div>
<div class="t m" style="left:884px;top:584px;color:#000">00</div>
<div class="t m" style="left:905px;top:584px;color:#000">00</div>
<div class="t m" style="left:926px;top:584px;color:#000">00</div>
<div class="t m" style="left:947px;top:584px;color:#000">00</div>
<div class="t m" style="left:968px;top:584px;color:#000">00</div>
<div class="t m" style="left:996px;top:584px;color:#000">00</div>
<div class="t m" style="left:1017px;top:584px;color:#000">00</div>
<div class="t m" style="left:1038px;top:584px;color:#000">00</div>
<div class="t m" style="left:1059px;top:584px;color:#000">00</div>
<div class="t m" style="left:1080px;top:584px;color:#000">00</div>
<div class="t m" style="left:1101px;top:584px;color:#000">00</div>
<div class="t m" style="left:1122px;top:584px;color:#000">00</div>
<div class="t m" style="left:1143px;top:584px;color:#000">00</div>
<div class="t m" style="left:1178px;top:584px;color:#808080">·</div>
<div class="t m" style="left:1185px;top:584px;color:#000">c</div>
<div class="t m" style="left:1192px;top:584px;color:#808080">·</div>
<div class="t m" style="left:1199px;top:584px;color:#808080">·</div>
<div class="t m" style="left:1206px;top:584px;color:#808080">·</div>
<div class="t m" style="left:1213px;top:584px;color:#808080">·</div>
<div class="t m" style="left:1220px;top:584px;color:#808080">·</div>
<div class="t m" style="left:1227px;top:584px;color:#808080">·</div>
<div class="t m" style="left:1241px;top:584px;color:#808080">·</div>
<div class="t m" style="left:1248px;top:584px;color:#808080">·</div>
<div class="t m" style="left:1255px;top:584px;color:#808080">·</div>
<div class="t m" style="left:1262px;top:584px;color:#808080">·</div>
<div class="t m" style="left:1269px;top:584px;color:#808080">·</div>
<div class="t m" style="left:1276px;top:584px;color:#808080">·</div>
<div class="t m" style="left:1283px;top:584px;color:#808080">·</div>
<div class="t m" style="left:1290px;top:584px;color:#808080">·</div>
<div class="t m" style="left:779px;top:599px;color:#404040">0080</div>
<div class="t m" style="left:821px;top:599px;color:#000">00</div>
<div class="t m" style="left:842px;top:599px;color:#000">00</div>
<div class="t m" style="left:863px;top:599px;color:#000">00</div>
<div class="t m" style="left:884px;top:599px;color:#000">00</div>
<div class="t m" style="left:905px;top:599px;color:#000">00</div>
<div class="t m" style="left:926px;top:599px;color:#000">00</div>
<div class="t m" style="left:947px;top:599px;color:#000">09</div>
<div class="t m" style="left:968px;top:599px;color:#000">00</div>
<div class="t m" style="left:996px;top:599px;color:#000">00</div>
<div class="t m" style="left:1017px;top:599px;color:#000">00</div>
<div class="t m" style="left:1038px;top:599px;color:#000">48</div>
<div class="t m" style="left:1059px;top:599px;color:#000">00</div>
<div class="t m" style="left:1080px;top:599px;color:#000">2a</div>
<div class="t m" style="left:1101px;top:599px;color:#000">00</div>
<div class="a" style="left:1122px;top:599px;width:21px;height:15px;background:#0078d7"></div>
<div class="t m" style="left:1122px;top:599px;color:#fff">5c</div>
<div class="a" style="left:1143px;top:599px;width:14px;height:15px;background:#0078d7"></div>
<div class="t m" style="left:1143px;top:599px;color:#fff">00</div>
<div class="t m" style="left:1178px;top:599px;color:#808080">·</div>
<div class="t m" style="left:1185px;top:599px;color:#808080">·</div>
<div class="t m" style="left:1192px;top:599px;color:#808080">·</div>
<div class="t m" style="left:1199px;top:599px;color:#808080">·</div>
<div class="t m" style="left:1206px;top:599px;color:#808080">·</div>
<div class="t m" style="left:1213px;top:599px;color:#808080">·</div>
<div class="t m" style="left:1220px;top:599px;color:#808080">·</div>
<div class="t m" style="left:1227px;top:599px;color:#808080">·</div>
<div class="t m" style="left:1241px;top:599px;color:#808080">·</div>
<div class="t m" style="left:1248px;top:599px;color:#808080">·</div>
<div class="t m" style="left:1255px;top:599px;color:#000">H</div>
<div class="t m" style="left:1262px;top:599px;color:#808080">·</div>
<div class="t m" style="left:1269px;top:599px;color:#000">*</div>
<div class="t m" style="left:1276px;top:599px;color:#808080">·</div>
<div class="a" style="left:1283px;top:599px;width:7px;height:15px;background:#0078d7"></div>
<div class="t m" style="left:1283px;top:599px;color:#fff">\</div>
<div class="a" style="left:1290px;top:599px;width:7px;height:15px;background:#0078d7"></div>
<div class="t m" style="left:1290px;top:599px;color:#fff">·</div>
<div class="t m" style="left:779px;top:614px;color:#404040">0090</div>
<div class="a" style="left:821px;top:614px;width:21px;height:15px;background:#0078d7"></div>
<div class="t m" style="left:821px;top:614px;color:#fff">5c</div>
<div class="a" style="left:842px;top:614px;width:21px;height:15px;background:#0078d7"></div>
<div class="t m" style="left:842px;top:614px;color:#fff">00</div>
<div class="a" style="left:863px;top:614px;width:21px;height:15px;background:#0078d7"></div>
<div class="t m" style="left:863px;top:614px;color:#fff">31</div>
<div class="a" style="left:884px;top:614px;width:21px;height:15px;background:#0078d7"></div>
<div class="t m" style="left:884px;top:614px;color:#fff">00</div>
<div class="a" style="left:905px;top:614px;width:21px;height:15px;background:#0078d7"></div>
<div class="t m" style="left:905px;top:614px;color:#fff">39</div>
<div class="a" style="left:926px;top:614px;width:21px;height:15px;background:#0078d7"></div>
<div class="t m" style="left:926px;top:614px;color:#fff">00</div>
<div class="a" style="left:947px;top:614px;width:21px;height:15px;background:#0078d7"></div>
<div class="t m" style="left:947px;top:614px;color:#fff">32</div>
<div class="a" style="left:968px;top:614px;width:28px;height:15px;background:#0078d7"></div>
<div class="t m" style="left:968px;top:614px;color:#fff">00</div>
<div class="a" style="left:996px;top:614px;width:21px;height:15px;background:#0078d7"></div>
<div class="t m" style="left:996px;top:614px;color:#fff">2e</div>
<div class="a" style="left:1017px;top:614px;width:21px;height:15px;background:#0078d7"></div>
<div class="t m" style="left:1017px;top:614px;color:#fff">00</div>
<div class="a" style="left:1038px;top:614px;width:21px;height:15px;background:#0078d7"></div>
<div class="t m" style="left:1038px;top:614px;color:#fff">31</div>
<div class="a" style="left:1059px;top:614px;width:21px;height:15px;background:#0078d7"></div>
<div class="t m" style="left:1059px;top:614px;color:#fff">00</div>
<div class="a" style="left:1080px;top:614px;width:21px;height:15px;background:#0078d7"></div>
<div class="t m" style="left:1080px;top:614px;color:#fff">36</div>
<div class="a" style="left:1101px;top:614px;width:21px;height:15px;background:#0078d7"></div>
<div class="t m" style="left:1101px;top:614px;color:#fff">00</div>
<div class="a" style="left:1122px;top:614px;width:21px;height:15px;background:#0078d7"></div>
<div class="t m" style="left:1122px;top:614px;color:#fff">38</div>
<div class="a" style="left:1143px;top:614px;width:14px;height:15px;background:#0078d7"></div>
<div class="t m" style="left:1143px;top:614px;color:#fff">00</div>
<div class="a" style="left:1178px;top:614px;width:7px;height:15px;background:#0078d7"></div>
<div class="t m" style="left:1178px;top:614px;color:#fff">\</div>
<div class="a" style="left:1185px;top:614px;width:7px;height:15px;background:#0078d7"></div>
<div class="t m" style="left:1185px;top:614px;color:#fff">·</div>
<div class="a" style="left:1192px;top:614px;width:7px;height:15px;background:#0078d7"></div>
<div class="t m" style="left:1192px;top:614px;color:#fff">1</div>
<div class="a" style="left:1199px;top:614px;width:7px;height:15px;background:#0078d7"></div>
<div class="t m" style="left:1199px;top:614px;color:#fff">·</div>
<div class="a" style="left:1206px;top:614px;width:7px;height:15px;background:#0078d7"></div>
<div class="t m" style="left:1206px;top:614px;color:#fff">9</div>
<div class="a" style="left:1213px;top:614px;width:7px;height:15px;background:#0078d7"></div>
<div class="t m" style="left:1213px;top:614px;color:#fff">·</div>
<div class="a" style="left:1220px;top:614px;width:7px;height:15px;background:#0078d7"></div>
<div class="t m" style="left:1220px;top:614px;color:#fff">2</div>
<div class="a" style="left:1227px;top:614px;width:14px;height:15px;background:#0078d7"></div>
<div class="t m" style="left:1227px;top:614px;color:#fff">·</div>
<div class="a" style="left:1241px;top:614px;width:7px;height:15px;background:#0078d7"></div>
<div class="t m" style="left:1241px;top:614px;color:#fff">.</div>
<div class="a" style="left:1248px;top:614px;width:7px;height:15px;background:#0078d7"></div>
<div class="t m" style="left:1248px;top:614px;color:#fff">·</div>
<div class="a" style="left:1255px;top:614px;width:7px;height:15px;background:#0078d7"></div>
<div class="t m" style="left:1255px;top:614px;color:#fff">1</div>
<div class="a" style="left:1262px;top:614px;width:7px;height:15px;background:#0078d7"></div>
<div class="t m" style="left:1262px;top:614px;color:#fff">·</div>
<div class="a" style="left:1269px;top:614px;width:7px;height:15px;background:#0078d7"></div>
<div class="t m" style="left:1269px;top:614px;color:#fff">6</div>
<div class="a" style="left:1276px;top:614px;width:7px;height:15px;background:#0078d7"></div>
<div class="t m" style="left:1276px;top:614px;color:#fff">·</div>
<div class="a" style="left:1283px;top:614px;width:7px;height:15px;background:#0078d7"></div>
<div class="t m" style="left:1283px;top:614px;color:#fff">8</div>
<div class="a" style="left:1290px;top:614px;width:7px;height:15px;background:#0078d7"></div>
<div class="t m" style="left:1290px;top:614px;color:#fff">·</div>
<div class="t m" style="left:779px;top:629px;color:#404040">00a0</div>
<div class="a" style="left:821px;top:629px;width:21px;height:15px;background:#0078d7"></div>
<div class="t m" style="left:821px;top:629px;color:#fff">2e</div>
<div class="a" style="left:842px;top:629px;width:21px;height:15px;background:#0078d7"></div>
<div class="t m" style="left:842px;top:629px;color:#fff">00</div>
<div class="a" style="left:863px;top:629px;width:21px;height:15px;background:#0078d7"></div>
<div class="t m" style="left:863px;top:629px;color:#fff">32</div>
<div class="a" style="left:884px;top:629px;width:21px;height:15px;background:#0078d7"></div>
<div class="t m" style="left:884px;top:629px;color:#fff">00</div>
<div class="a" style="left:905px;top:629px;width:21px;height:15px;background:#0078d7"></div>
<div class="t m" style="left:905px;top:629px;color:#fff">2e</div>
<div class="a" style="left:926px;top:629px;width:21px;height:15px;background:#0078d7"></div>
<div class="t m" style="left:926px;top:629px;color:#fff">00</div>
<div class="a" style="left:947px;top:629px;width:21px;height:15px;background:#0078d7"></div>
<div class="t m" style="left:947px;top:629px;color:#fff">31</div>
<div class="a" style="left:968px;top:629px;width:28px;height:15px;background:#0078d7"></div>
<div class="t m" style="left:968px;top:629px;color:#fff">00</div>
<div class="a" style="left:996px;top:629px;width:21px;height:15px;background:#0078d7"></div>
<div class="t m" style="left:996px;top:629px;color:#fff">30</div>
<div class="a" style="left:1017px;top:629px;width:21px;height:15px;background:#0078d7"></div>
<div class="t m" style="left:1017px;top:629px;color:#fff">00</div>
<div class="a" style="left:1038px;top:629px;width:21px;height:15px;background:#0078d7"></div>
<div class="t m" style="left:1038px;top:629px;color:#fff">5c</div>
<div class="a" style="left:1059px;top:629px;width:21px;height:15px;background:#0078d7"></div>
<div class="t m" style="left:1059px;top:629px;color:#fff">00</div>
<div class="a" style="left:1080px;top:629px;width:21px;height:15px;background:#0078d7"></div>
<div class="t m" style="left:1080px;top:629px;color:#fff">70</div>
<div class="a" style="left:1101px;top:629px;width:21px;height:15px;background:#0078d7"></div>
<div class="t m" style="left:1101px;top:629px;color:#fff">00</div>
<div class="a" style="left:1122px;top:629px;width:21px;height:15px;background:#0078d7"></div>
<div class="t m" style="left:1122px;top:629px;color:#fff">75</div>
<div class="a" style="left:1143px;top:629px;width:14px;height:15px;background:#0078d7"></div>
<div class="t m" style="left:1143px;top:629px;color:#fff">00</div>
<div class="a" style="left:1178px;top:629px;width:7px;height:15px;background:#0078d7"></div>
<div class="t m" style="left:1178px;top:629px;color:#fff">.</div>
<div class="a" style="left:1185px;top:629px;width:7px;height:15px;background:#0078d7"></div>
<div class="t m" style="left:1185px;top:629px;color:#fff">·</div>
<div class="a" style="left:1192px;top:629px;width:7px;height:15px;background:#0078d7"></div>
<div class="t m" style="left:1192px;top:629px;color:#fff">2</div>
<div class="a" style="left:1199px;top:629px;width:7px;height:15px;background:#0078d7"></div>
<div class="t m" style="left:1199px;top:629px;color:#fff">·</div>
<div class="a" style="left:1206px;top:629px;width:7px;height:15px;background:#0078d7"></div>
<div class="t m" style="left:1206px;top:629px;color:#fff">.</div>
<div class="a" style="left:1213px;top:629px;width:7px;height:15px;background:#0078d7"></div>
<div class="t m" style="left:1213px;top:629px;color:#fff">·</div>
<div class="a" style="left:1220px;top:629px;width:7px;height:15px;background:#0078d7"></div>
<div class="t m" style="left:1220px;top:629px;color:#fff">1</div>
<div class="a" style="left:1227px;top:629px;width:14px;height:15px;background:#0078d7"></div>
<div class="t m" style="left:1227px;top:629px;color:#fff">·</div>
<div class="a" style="left:1241px;top:629px;width:7px;height:15px;background:#0078d7"></div>
<div class="t m" style="left:1241px;top:629px;color:#fff">0</div>
<div class="a" style="left:1248px;top:629px;width:7px;height:15px;background:#0078d7"></div>
<div class="t m" style="left:1248px;top:629px;color:#fff">·</div>
<div class="a" style="left:1255px;top:629px;width:7px;height:15px;background:#0078d7"></div>
<div class="t m" style="left:1255px;top:629px;color:#fff">\</div>
<div class="a" style="left:1262px;top:629px;width:7px;height:15px;background:#0078d7"></div>
<div class="t m" style="left:1262px;top:629px;color:#fff">·</div>
<div class="a" style="left:1269px;top:629px;width:7px;height:15px;background:#0078d7"></div>
<div class="t m" style="left:1269px;top:629px;color:#fff">p</div>
<div class="a" style="left:1276px;top:629px;width:7px;height:15px;background:#0078d7"></div>
<div class="t m" style="left:1276px;top:629px;color:#fff">·</div>
<div class="a" style="left:1283px;top:629px;width:7px;height:15px;background:#0078d7"></div>
<div class="t m" style="left:1283px;top:629px;color:#fff">u</div>
<div class="a" style="left:1290px;top:629px;width:7px;height:15px;background:#0078d7"></div>
<div class="t m" style="left:1290px;top:629px;color:#fff">·</div>
<div class="t m" style="left:779px;top:644px;color:#404040">00b0</div>
<div class="a" style="left:821px;top:644px;width:21px;height:15px;background:#0078d7"></div>
<div class="t m" style="left:821px;top:644px;color:#fff">62</div>
<div class="a" style="left:842px;top:644px;width:21px;height:15px;background:#0078d7"></div>
<div class="t m" style="left:842px;top:644px;color:#fff">00</div>
<div class="a" style="left:863px;top:644px;width:21px;height:15px;background:#0078d7"></div>
<div class="t m" style="left:863px;top:644px;color:#fff">6c</div>
<div class="a" style="left:884px;top:644px;width:21px;height:15px;background:#0078d7"></div>
<div class="t m" style="left:884px;top:644px;color:#fff">00</div>
<div class="a" style="left:905px;top:644px;width:21px;height:15px;background:#0078d7"></div>
<div class="t m" style="left:905px;top:644px;color:#fff">69</div>
<div class="a" style="left:926px;top:644px;width:21px;height:15px;background:#0078d7"></div>
<div class="t m" style="left:926px;top:644px;color:#fff">00</div>
<div class="a" style="left:947px;top:644px;width:21px;height:15px;background:#0078d7"></div>
<div class="t m" style="left:947px;top:644px;color:#fff">63</div>
<div class="a" style="left:968px;top:644px;width:14px;height:15px;background:#0078d7"></div>
<div class="t m" style="left:968px;top:644px;color:#fff">00</div>
<div class="a" style="left:1178px;top:644px;width:7px;height:15px;background:#0078d7"></div>
<div class="t m" style="left:1178px;top:644px;color:#fff">b</div>
<div class="a" style="left:1185px;top:644px;width:7px;height:15px;background:#0078d7"></div>
<div class="t m" style="left:1185px;top:644px;color:#fff">·</div>
<div class="a" style="left:1192px;top:644px;width:7px;height:15px;background:#0078d7"></div>
<div class="t m" style="left:1192px;top:644px;color:#fff">l</div>
<div class="a" style="left:1199px;top:644px;width:7px;height:15px;background:#0078d7"></div>
<div class="t m" style="left:1199px;top:644px;color:#fff">·</div>
<div class="a" style="left:1206px;top:644px;width:7px;height:15px;background:#0078d7"></div>
<div class="t m" style="left:1206px;top:644px;color:#fff">i</div>
<div class="a" style="left:1213px;top:644px;width:7px;height:15px;background:#0078d7"></div>
<div class="t m" style="left:1213px;top:644px;color:#fff">·</div>
<div class="a" style="left:1220px;top:644px;width:7px;height:15px;background:#0078d7"></div>
<div class="t m" style="left:1220px;top:644px;color:#fff">c</div>
<div class="a" style="left:1227px;top:644px;width:7px;height:15px;background:#0078d7"></div>
<div class="t m" style="left:1227px;top:644px;color:#fff">·</div>
</body></html>
